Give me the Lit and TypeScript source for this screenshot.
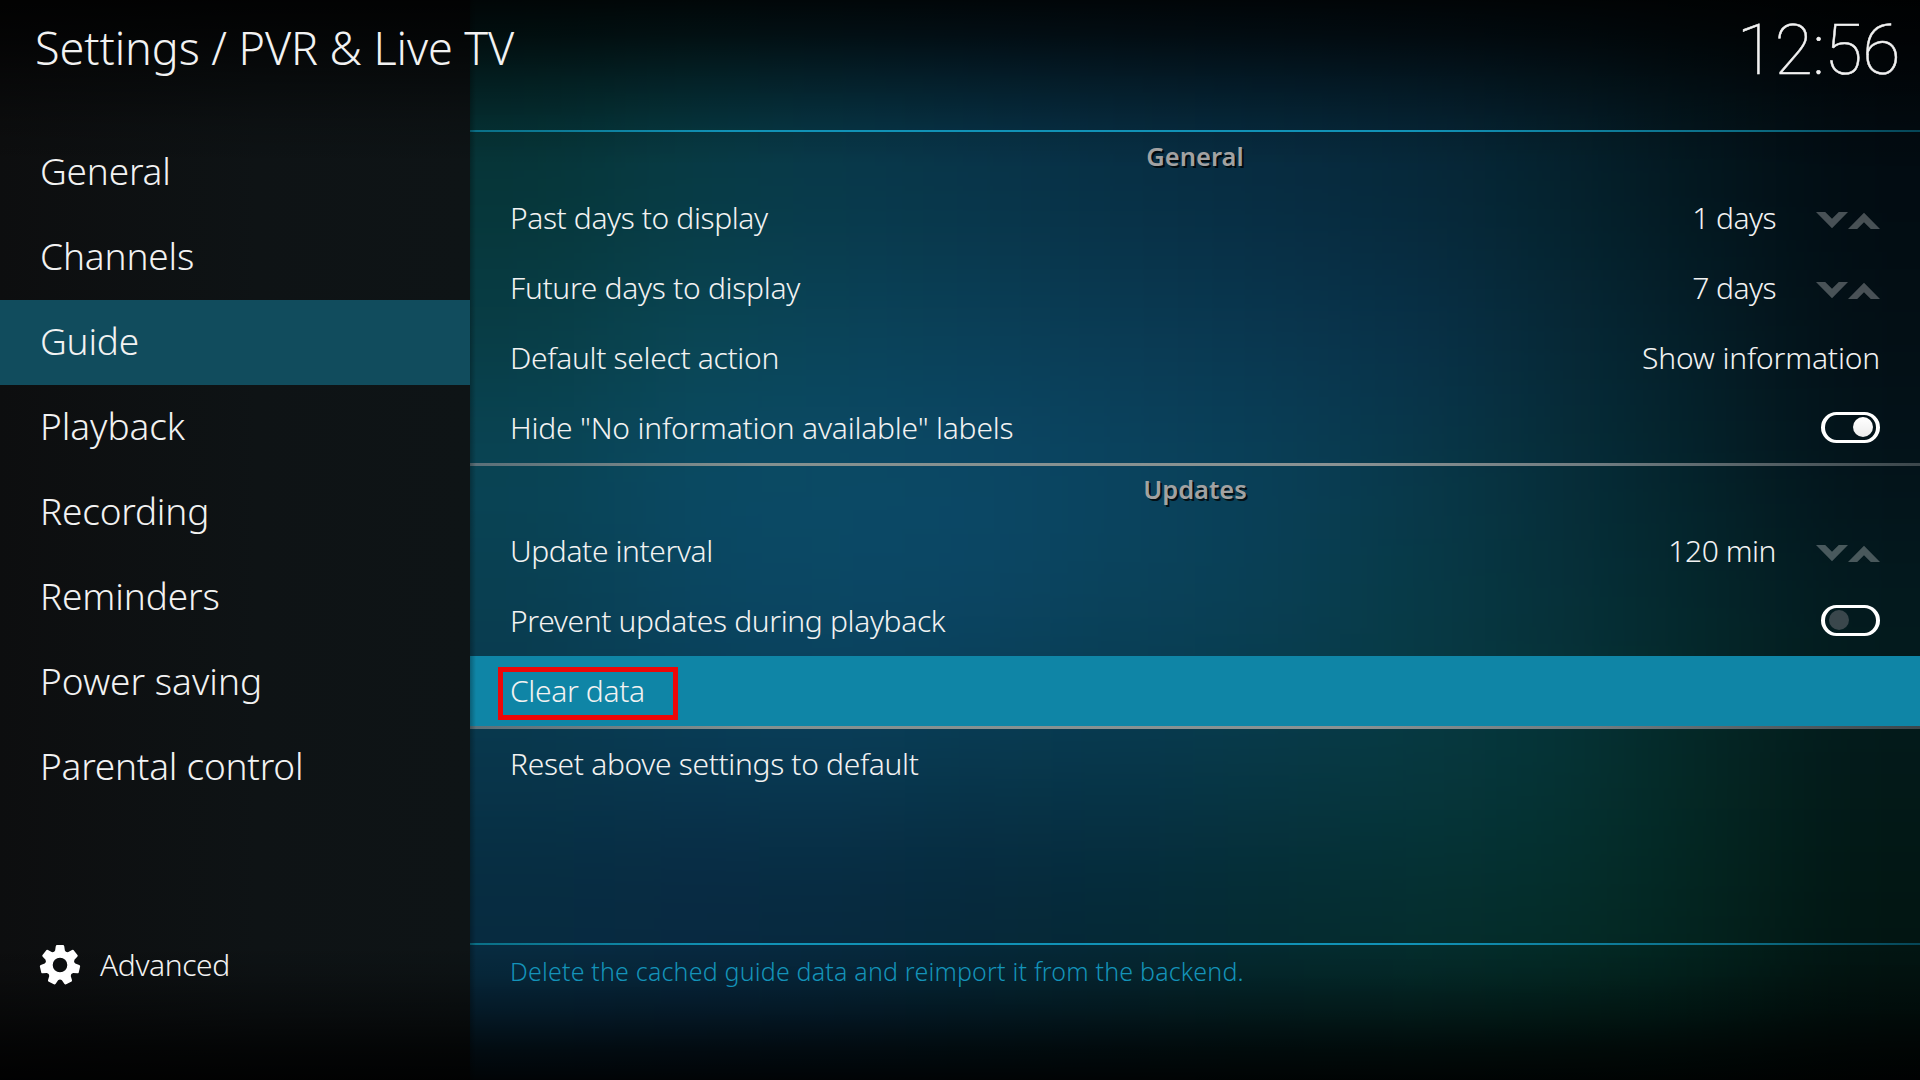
import { LitElement, html, svg, css, nothing } from "lit";
import { customElement, property } from "lit/decorators.js";
import { classMap } from "lit/directives/class-map.js";
import { styleMap } from "lit/directives/style-map.js";

/* Colour mesh of the fanart backdrop: each cell is blurred into its neighbours. */
const MESH: string[][] = [
  ["#053235", "#063a42", "#073748", "#073248", "#072d42", "#062a3e", "#062638", "#051f2c", "#03151c", "#020a10"],
  ["#063639", "#073b45", "#08394a", "#083549", "#073045", "#072c41", "#06293b", "#05232e", "#03171f", "#020c12"],
  ["#083d46", "#0a4754", "#0a445a", "#0a4059", "#0a3b54", "#093750", "#083149", "#062938", "#041e28", "#030f15"],
  ["#094556", "#0a4a64", "#0b4b66", "#0b4866", "#0a4460", "#094058", "#08394b", "#062e3a", "#04222a", "#03131a"],
  ["#093e50", "#0a4560", "#0b4764", "#0b4563", "#0a425a", "#093f54", "#073a47", "#06313a", "#04272c", "#031a1e"],
  ["#08384e", "#083b54", "#093d57", "#083a50", "#07394e", "#073a49", "#063a42", "#053437", "#042825", "#031a1a"],
  ["#072c40", "#082a42", "#072b41", "#06293d", "#052b3b", "#052d36", "#053033", "#042f2d", "#032520", "#021714"],
  ["#072a40", "#07283f", "#06273c", "#052735", "#05262f", "#04282a", "#042a28", "#032822", "#02201b", "#021310"],
];

@customElement("fanart-backdrop")
export class FanartBackdrop extends LitElement {
  static styles = css`
    :host { display: block; overflow: hidden; }
    svg { display: block; width: 100%; height: 100%; }
  `;
  render() {
    const cw = 145;
    const ch = 135;
    return html`<svg viewBox="0 0 1450 1080" preserveAspectRatio="none" aria-hidden="true">
      <defs>
        <filter id="soft" filterUnits="userSpaceOnUse" x="-300" y="-300" width="2050" height="1680" color-interpolation-filters="sRGB">
          <feGaussianBlur stdDeviation="62"></feGaussianBlur>
        </filter>
      </defs>
      <g filter="url(#soft)">
        ${MESH.map((row, r) =>
          row.map((fill, c) => {
            const left = c === 0 ? -300 : c * cw;
            const right = c === row.length - 1 ? 1750 : (c + 1) * cw + 1;
            const top = r === 0 ? -300 : r * ch;
            const bottom = r === MESH.length - 1 ? 1380 : (r + 1) * ch + 1;
            return svg`<rect x=${left} y=${top} width=${right - left} height=${bottom - top} fill=${fill}></rect>`;
          })
        )}
      </g>
    </svg>`;
  }
}

@customElement("gear-icon")
export class GearIcon extends LitElement {
  static styles = css`
    :host { display: block; width: 42px; height: 42px; }
    svg { display: block; width: 100%; height: 100%; }
  `;
  private outline(): string {
    const pt = (r: number, deg: number) => {
      const a = ((deg - 90) * Math.PI) / 180;
      return `${(r * Math.cos(a)).toFixed(2)} ${(r * Math.sin(a)).toFixed(2)}`;
    };
    const parts: string[] = [];
    for (let i = 0; i < 7; i++) {
      const d = (i * 360) / 7;
      parts.push(
        `${i === 0 ? "M" : "L"}${pt(15.4, d - 18.5)} L${pt(19.2, d - 12.8)} Q${pt(20.1, d - 11.6)} ${pt(20.2, d - 9.5)}`,
        `L${pt(20.2, d + 9.5)} Q${pt(20.1, d + 11.6)} ${pt(19.2, d + 12.8)} L${pt(15.4, d + 18.5)}`,
        `Q${pt(13.6, d + 25.7)} ${pt(15.4, d + 360 / 7 - 18.5)}`
      );
    }
    return `${parts.join(" ")} Z M7.3 0 A7.3 7.3 0 1 0 -7.3 0 A7.3 7.3 0 1 0 7.3 0 Z`;
  }
  render() {
    return html`<svg viewBox="-21 -21 42 42" aria-hidden="true">
      <path fill="#fff" fill-rule="evenodd" d=${this.outline()}></path>
    </svg>`;
  }
}

@customElement("spin-arrows")
export class SpinArrows extends LitElement {
  static styles = css`
    :host { display: block; width: 64px; height: 18px; }
    svg { display: block; }
  `;
  render() {
    return html`<svg width="64" height="18" viewBox="0 0 64 18" aria-hidden="true">
      <g fill="#fff" fill-opacity="0.28">
        <path d="M0 0H9.2L16 6.8L22.8 0H32L16 16.2Z"></path>
        <path d="M32 17H41.2L48 10.2L54.8 17H64L48 .8Z"></path>
      </g>
    </svg>`;
  }
}

@customElement("toggle-switch")
export class ToggleSwitch extends LitElement {
  @property({ type: Boolean }) on = false;
  static styles = css`
    :host { display: block; }
    .track {
      box-sizing: border-box; display: flex; align-items: center; justify-content: flex-start;
      width: 59px; height: 31px; padding: 0 3px 0 4px; border: 4px solid #fff;
      border-width: 3px 4px; border-radius: 16px;
    }
    .track.on { justify-content: flex-end; }
    .knob { width: 20px; height: 20px; margin-top: -1px; border-radius: 50%; background: #3a474c; }
    .on .knob { background: linear-gradient(#fff, #ececec); }
  `;
  render() {
    return html`<div class=${classMap({ track: true, on: this.on })}><div class="knob"></div></div>`;
  }
}

type Control =
  | { kind: "spin"; value: string; tracking?: number }
  | { kind: "text"; value: string; tracking?: number }
  | { kind: "toggle"; on: boolean }
  | { kind: "none" };

interface Setting { label: string; tracking: number; control: Control; focused?: boolean; }
interface Group { title?: string; settings: Setting[]; }
interface Category { label: string; tracking: number; }

const CATEGORIES: Category[] = [
  { label: "General", tracking: -0.2 },
  { label: "Channels", tracking: -0.15 },
  { label: "Guide", tracking: -0.2 },
  { label: "Playback", tracking: -0.05 },
  { label: "Recording", tracking: -0.2 },
  { label: "Reminders", tracking: -0.14 },
  { label: "Power saving", tracking: 0 },
  { label: "Parental control", tracking: -0.23 },
];

const GROUPS: Group[] = [
  {
    title: "General",
    settings: [
      { label: "Past days to display", tracking: -0.4, control: { kind: "spin", value: "1 days", tracking: -0.55 } },
      { label: "Future days to display", tracking: -0.3, control: { kind: "spin", value: "7 days", tracking: -0.55 } },
      { label: "Default select action", tracking: -0.32, control: { kind: "text", value: "Show information", tracking: -0.16 } },
      { label: 'Hide "No information available" labels', tracking: -0.21, control: { kind: "toggle", on: true } },
    ],
  },
  {
    title: "Updates",
    settings: [
      { label: "Update interval", tracking: -0.4, control: { kind: "spin", value: "120 min", tracking: -0.45 } },
      { label: "Prevent updates during playback", tracking: -0.36, control: { kind: "toggle", on: false } },
      { label: "Clear data", tracking: -0.35, control: { kind: "none" }, focused: true },
    ],
  },
  { settings: [{ label: "Reset above settings to default", tracking: -0.34, control: { kind: "none" } }] },
];

@customElement("app-root")
export class AppRoot extends LitElement {
  static styles = css`
    :host {
      display: block; position: relative; width: 1920px; height: 1080px; overflow: hidden;
      background: #000; color: #f2f2f2;
      font-family: "Noto Sans", "Open Sans", sans-serif; font-weight: 300;
    }
    .screen { display: grid; grid-template-columns: 470px 1450px; height: 1080px; }
    .backdrop { position: absolute; left: 470px; top: 0; width: 1450px; height: 1080px; }
    .shade {
      position: absolute; inset: 0; pointer-events: none;
      background:
        linear-gradient(to bottom, rgba(0,0,0,.88) 0, rgba(0,0,0,.72) 35px, rgba(0,0,0,.42) 80px, rgba(0,0,0,.14) 125px, rgba(0,0,0,0) 165px),
        linear-gradient(to top, rgba(0,0,0,.9) 0, rgba(0,0,0,.72) 32px, rgba(0,0,0,.4) 68px, rgba(0,0,0,.12) 105px, rgba(0,0,0,0) 135px);
    }
    .top {
      position: absolute; left: 0; top: 0; width: 1920px; height: 130px; box-sizing: border-box;
      display: flex; justify-content: space-between; padding: 0 20px 0 35px;
    }
    .title { font-size: 45px; line-height: 60px; padding-top: 18px; white-space: pre; letter-spacing: -.08px; }
    .clock {
      font-family: Roboto, sans-serif; font-weight: 100; font-size: 70px; line-height: 82px;
      padding-top: 9px; letter-spacing: -.5px; -webkit-text-stroke: .5px #f2f2f2;
    }
    .side {
      display: flex; flex-direction: column; box-sizing: border-box; padding-top: 130px;
      background: linear-gradient(90deg, #0d0e0f, #0e1315 55%, #0e1416);
    }
    .category {
      box-sizing: border-box; height: 85px; padding: 0 40px; font-size: 37px; line-height: 82px;
      position: relative;
    }
    .category.active { background: #114c5d; }
    .level {
      display: flex; align-items: center; gap: 19px; height: 70px; margin-top: auto; margin-bottom: 80px;
      padding-left: 39px; font-size: 30px; position: relative; letter-spacing: -.4px;
    }
    .level-text { line-height: 68px; }
    .main { display: flex; flex-direction: column; position: relative; padding-top: 130px; }
    .rule { height: 2px; flex: none; background: linear-gradient(90deg, #0a6f86, #1192b6 18%, #1192b6 65%, #0c6c84 88%, #064657); }
    .list { height: 811px; padding-top: 1px; box-sizing: border-box; display: flex; flex-direction: column; }
    .heading {
      height: 50px; line-height: 47px; text-align: center; font-size: 25.5px; font-weight: 600;
      color: #a2a2a2; text-shadow: 2px 2px 0 rgba(0,0,0,.75);
    }
    .sep { height: 3px; background: linear-gradient(90deg, #5b7079, #84908f 20%, #8a9293 60%, #6f7b80 78%, #3c474c); }
    .row { display: flex; align-items: center; height: 70px; padding: 0 40px; font-size: 30px; }
    .row.focused { background: #0f85a6; }
    .label, .value { line-height: 70px; height: 70px; white-space: pre; }
    .value { margin-left: auto; }
    .spin { margin-left: 40px; margin-top: 6px; }
    .switch { margin-left: auto; margin-top: -1px; }
    .help { font-size: 25px; line-height: 50px; padding: 1px 40px; color: #1493b9; letter-spacing: .19px; }
    .edge { position: absolute; left: 0; top: 0; width: 6px; height: 100%; background: linear-gradient(90deg, rgba(0,0,0,.28), transparent); }
    .marker {
      position: absolute; left: 498px; top: 667px; width: 180px; height: 53px;
      box-sizing: border-box; border: 5px solid #ed0707;
    }
  `;

  private tracked(px = 0) {
    return styleMap({ letterSpacing: `${px}px` });
  }

  private renderControl(c: Control) {
    switch (c.kind) {
      case "spin":
        return html`<span class="value" style=${this.tracked(c.tracking)}>${c.value}</span><spin-arrows class="spin"></spin-arrows>`;
      case "text":
        return html`<span class="value" style=${this.tracked(c.tracking)}>${c.value}</span>`;
      case "toggle":
        return html`<toggle-switch class="switch" ?on=${c.on}></toggle-switch>`;
      default:
        return nothing;
    }
  }

  private renderGroup(group: Group, index: number) {
    return html`
      ${index > 0 ? html`<div class="sep"></div>` : nothing}
      ${group.title ? html`<div class="heading">${group.title}</div>` : nothing}
      ${group.settings.map(
        (s) => html`<div class=${classMap({ row: true, focused: !!s.focused })}>
          <span class="label" style=${this.tracked(s.tracking)}>${s.label}</span>${this.renderControl(s.control)}
        </div>`
      )}
    `;
  }

  render() {
    return html`
      <fanart-backdrop class="backdrop"></fanart-backdrop>
      <div class="screen">
        <nav class="side">
          <div class="shade"></div>
          ${CATEGORIES.map(
            (c) => html`<div class=${classMap({ category: true, active: c.label === "Guide" })} style=${this.tracked(c.tracking)}>${c.label}</div>`
          )}
          <div class="level"><gear-icon></gear-icon><span class="level-text">Advanced</span></div>
        </nav>
        <main class="main">
          <div class="edge"></div>
          <div class="rule"></div>
          <div class="list">${GROUPS.map((g, i) => this.renderGroup(g, i))}</div>
          <div class="rule"></div>
          <div class="help">Delete the cached guide data and reimport it from the backend.</div>
        </main>
      </div>
      <header class="top">
        <div class="title">Settings / PVR &amp; Live TV</div>
        <div class="clock">12:56</div>
      </header>
      <div class="marker"></div>
    `;
  }
}
